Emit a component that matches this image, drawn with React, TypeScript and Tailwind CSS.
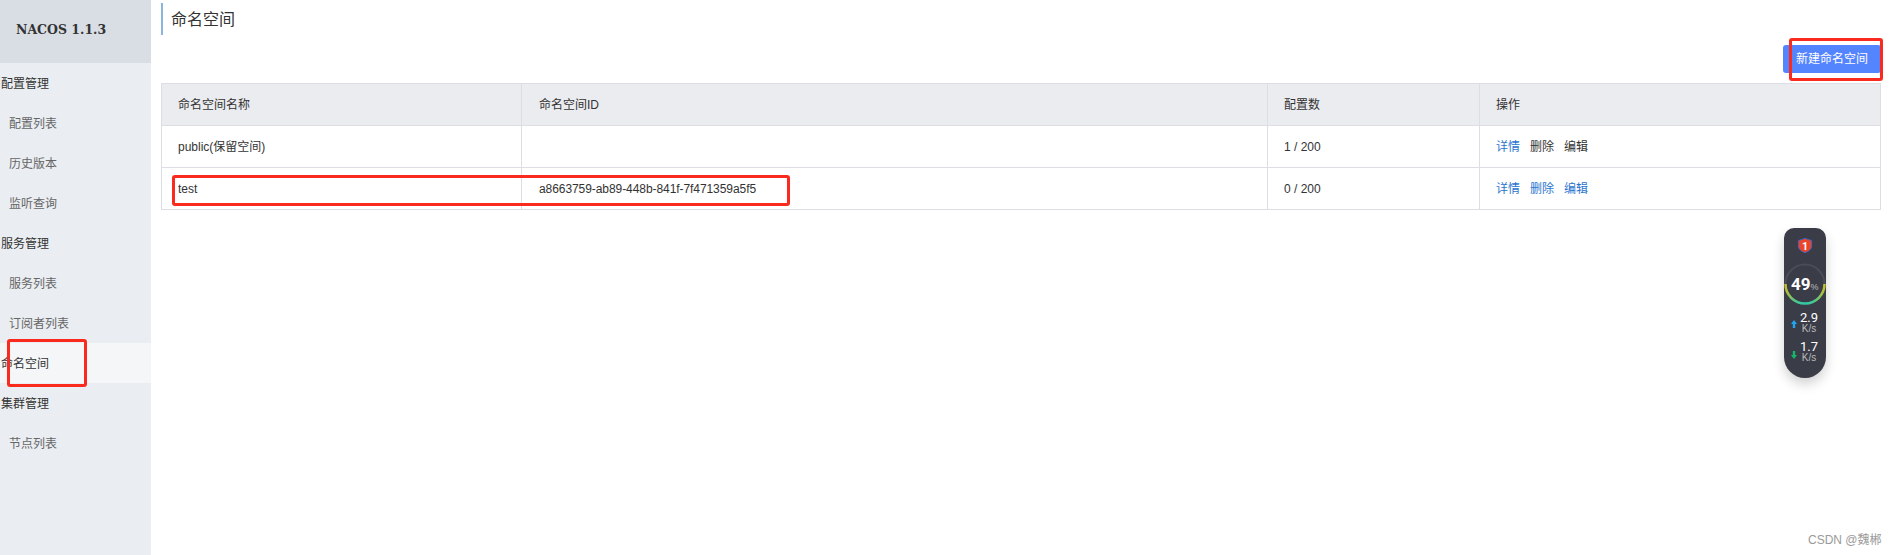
import React from 'react';

const FONT = '[font-family:"Liberation_Sans","Noto_Sans_CJK_SC",sans-serif]';

const menu = [
  { label: '配置管理', group: true },
  { label: '配置列表' },
  { label: '历史版本' },
  { label: '监听查询' },
  { label: '服务管理', group: true },
  { label: '服务列表' },
  { label: '订阅者列表' },
  { label: '命名空间', group: true, active: true },
  { label: '集群管理', group: true },
  { label: '节点列表' },
];

const rows = [
  { name: 'public(保留空间)', id: '', count: '1 / 200', blueDelete: false },
  { name: 'test', id: 'a8663759-ab89-448b-841f-7f471359a5f5', count: '0 / 200', blueDelete: true },
];

const Sidebar = () => (
  <aside className="w-[151px] shrink-0 bg-[#eaedf1]">
    <div className="h-[63px] bg-[#d9dee5] pl-[16px] pb-[2px] flex items-center text-[12.5px] font-bold text-[#333] [font-family:'DejaVu_Serif',serif]">
      NACOS 1.1.3
    </div>
    <ul>
      {menu.map((item) => (
        <li
          key={item.label}
          className={`h-[40px] pt-[1px] flex items-center text-[12px] ${item.group ? 'pl-[1px] text-[#333]' : 'pl-[9px] text-[#666]'} ${item.active ? 'bg-[#f4f6f8]' : ''}`}
        >
          {item.label}
        </li>
      ))}
    </ul>
  </aside>
);

const Table = () => (
  <table className="w-[1720px] table-fixed border-collapse text-[12px] text-[#333]">
    <colgroup>
      <col className="w-[360px]" />
      <col className="w-[746px]" />
      <col className="w-[212px]" />
      <col />
    </colgroup>
    <thead>
      <tr className="h-[42px] bg-[#ebecf0]">
        <th className="border border-[#dcdee3] pl-[16px] text-left font-normal">命名空间名称</th>
        <th className="border border-[#dcdee3] pl-[17px] text-left font-normal">命名空间ID</th>
        <th className="border border-[#dcdee3] pl-[16px] text-left font-normal">配置数</th>
        <th className="border border-[#dcdee3] pl-[16px] text-left font-normal">操作</th>
      </tr>
    </thead>
    <tbody>
      {rows.map((r) => (
        <tr key={r.name} className="h-[42px]">
          <td className="border border-[#dcdee3] pl-[16px]">{r.name}</td>
          <td className="border border-[#dcdee3] pl-[17px] tracking-[-0.07px]">{r.id}</td>
          <td className="border border-[#dcdee3] pl-[16px]">{r.count}</td>
          <td className="border border-[#dcdee3] pl-[16px]">
            <div className="flex gap-[10px]">
              <a className="text-[#2a75d0]">详情</a>
              <a className={r.blueDelete ? 'text-[#2a75d0]' : 'text-[#333]'}>删除</a>
              <a className={r.blueDelete ? 'text-[#2a75d0]' : 'text-[#333]'}>编辑</a>
            </div>
          </td>
        </tr>
      ))}
    </tbody>
  </table>
);

const Speed = ({ value, up }: { value: string; up: boolean }) => (
  <div className="flex items-center pl-[7px]">
    <svg className={up ? 'mt-[1px]' : 'mt-[5px]'} width="6" height="8" viewBox="0 0 6 8">
      <path d={up ? 'M3 0 L6 4 H4.2 V8 H1.8 V4 H0 Z' : 'M3 8 L6 4 H4.2 V0 H1.8 V4 H0 Z'} fill={up ? '#1ea7f0' : '#12b76a'} />
    </svg>
    <div className="ml-[3px] text-center">
      <div className="text-[13px] leading-[11px] [font-family:'Roboto',sans-serif]">{value}</div>
      <div className="mt-[1px] text-[10px] leading-[10px] text-[#bbb]">K/s</div>
    </div>
  </div>
);

// floating network/memory widget on the right
const SpeedWidget = () => (
  <div className="absolute left-[1784px] top-[228px] w-[42px] h-[150px] bg-[#3a3c47] rounded-t-[10px] rounded-b-[21px] shadow-[0_6px_12px_rgba(0,0,0,0.18)] text-white">
    <svg className="absolute left-[13px] top-[9px]" width="16" height="17" viewBox="0 0 18 18">
      <path d="M9 1 L16.5 3.5 V9.5 C16.5 13 13 15.8 9 17 C5 15.8 1.5 13 1.5 9.5 V3.5 Z" fill="#e8452a" stroke="#3f64c8" strokeWidth="1" />
      <text x="9" y="13.5" textAnchor="middle" fontSize="12" fontWeight="700" fill="#fff" fontFamily="Roboto, sans-serif">1</text>
    </svg>
    <svg className="absolute left-0 top-[35px]" width="42" height="42" viewBox="0 0 42 42">
      <defs>
        <linearGradient id="ring" x1="0" y1="0" x2="1" y2="0">
          <stop offset="0" stopColor="#c2bd2a" />
          <stop offset="0.25" stopColor="#4cc98e" />
          <stop offset="0.5" stopColor="#2fc4a8" />
          <stop offset="0.75" stopColor="#4cc98e" />
          <stop offset="1" stopColor="#c2bd2a" />
        </linearGradient>
      </defs>
      <circle cx="21" cy="21" r="19.5" fill="none" stroke="#4a4c58" strokeWidth="2" />
      <path d="M1.5 21 A19.5 19.5 0 0 0 40.5 21" fill="none" stroke="url(#ring)" strokeWidth="2.5" />
    </svg>
    <div className="absolute left-[7px] top-[47px] flex items-baseline leading-[18px]">
      <span className="text-[17px] font-bold [font-family:'Roboto',sans-serif]">49</span>
      <span className="text-[9px] text-[#bbb]">%</span>
    </div>
    <div className="absolute left-0 top-[84px] w-full flex flex-col gap-[7px]">
      <Speed value="2.9" up />
      <Speed value="1.7" up={false} />
    </div>
  </div>
);

export default function App() {
  return (
    <div className={`relative flex h-[555px] w-[1891px] overflow-hidden bg-white ${FONT}`}>
      <Sidebar />
      <main className="flex-1 pl-[10px] pt-[3px]">
        <div className="h-[32px] border-l-2 border-[#8ab6de] pl-[8px] pt-[2px] flex items-center text-[16px] text-[#333]">
          命名空间
        </div>
        <div className="w-[1720px] mt-[10px] mb-[10px] flex justify-end">
          <button className="h-[28px] w-[98px] rounded-[3px] bg-[#5584ff] text-[12px] text-white">
            新建命名空间
          </button>
        </div>
        <Table />
      </main>

      <SpeedWidget />

      {/* annotation boxes */}
      <div className="absolute left-[7px] top-[339px] w-[80px] h-[48px] border-[3px] border-[#fb2a1e] rounded-[3px]" />
      <div className="absolute left-[1789px] top-[38px] w-[94px] h-[43px] border-[3px] border-[#fb2a1e] rounded-[3px]" />
      <div className="absolute left-[172px] top-[175px] w-[618px] h-[31px] border-[3px] border-[#fb2a1e] rounded-[3px]" />

      <div className="absolute left-[1808px] top-[532px] text-[12px] leading-[16px] text-[#9a9a9a]">CSDN @魏郴</div>
    </div>
  );
}
